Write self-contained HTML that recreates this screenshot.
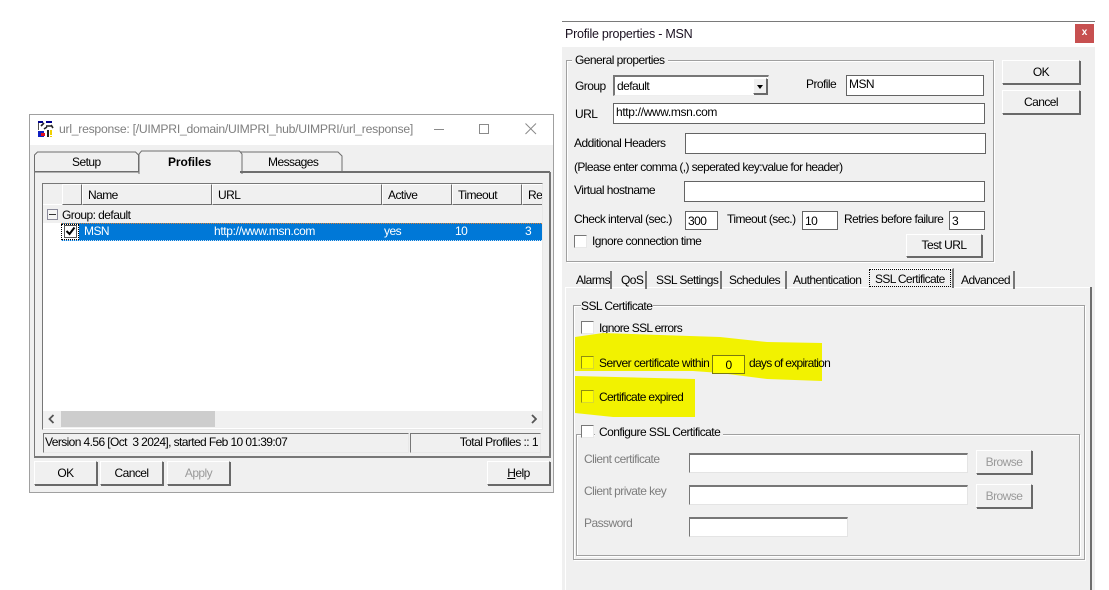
<!DOCTYPE html>
<html><head><meta charset="utf-8"><style>
html,body{margin:0;padding:0;background:#fff}
#p{position:relative;width:1109px;height:590px;overflow:hidden;background:#fff;font:12px/14px "Liberation Sans",sans-serif;color:#000;letter-spacing:-.55px}
#p div,#p span.t{position:absolute;box-sizing:border-box;white-space:nowrap}
.b{background:#f0f0f0;border:1px solid;border-color:#fff #696969 #696969 #fff;box-shadow:1px 1px 0 #696969;text-align:center}
.i{background:#fff;border:1px solid #646464;padding-left:2px}
.d{background:#fff;border:1px solid #e4e4e4;border-top:2px solid #777;border-left:1px solid #777}
.c{width:13px;height:13px;background:#fff;border:1px solid;border-color:#777 #e8e8e8 #e8e8e8 #777}
.y{background:#ffff00;border-color:#8f8f10 #d8d830 #d8d830 #8f8f10}
.g{border:1px solid #a0a0a0;box-shadow:1px 1px 0 #fff,inset 1px 1px 0 #fff}
.h{background:#f0f0f0;border:1px solid;border-color:#fff #6e6e6e #6e6e6e #fff;padding-left:5px;line-height:20px}
.dis{color:#7d7d7d}
.tb{border-right:2px solid #777;height:18px;line-height:18px}
.u{letter-spacing:-.35px}
.n{letter-spacing:-.66px}
</style></head><body><div id="p">

<!-- left window -->
<div style="left:29px;top:114px;width:525px;height:379px;background:#f0f0f0;border:1px solid #a0a0a0"></div>
<div style="left:30px;top:115px;width:523px;height:30px;background:#fff"></div>
<svg style="position:absolute;left:38px;top:121px" width="16" height="16" viewBox="0 0 16 16"><rect x="1" y="1" width="14" height="9" fill="#fff"/><rect width="5" height="2" fill="#00008c"/><rect x="8" width="6" height="2" fill="#00008c"/><path d="M0 2v7M3 5l3-3M8 5h5M13 4l2 3M6 8l3-2" stroke="#222" stroke-width="1.6" fill="none"/><rect y="10" width="6" height="6" fill="#1020c0"/><rect x="3" y="12" width="4" height="3" fill="#e01020"/><rect x="9" y="9" width="2" height="7" fill="#222"/><rect x="12" y="9" width="2" height="5" fill="#f0d000"/><rect x="12" y="15" width="2" height="1" fill="#f0d000"/></svg>
<div style="left:59px;top:122px;color:#7f7f7f;font-size:12.2px;letter-spacing:-.26px">url_response: [/UIMPRI_domain/UIMPRI_hub/UIMPRI/url_response]</div>
<div style="left:434px;top:129px;width:10px;height:1px;background:#8a8a8a"></div>
<div style="left:479px;top:124px;width:10px;height:10px;border:1px solid #8a8a8a"></div>
<svg style="position:absolute;left:525px;top:123px" width="12" height="12"><path d="M.5 .5l10.500 10.500M11 .5L.5 11" stroke="#8a8a8a" fill="none"/></svg>

<!-- left tabs -->
<svg style="position:absolute;left:33px;top:150px" width="315" height="24" fill="#f0f0f0" stroke="#6e6e6e"><path d="M1.500 22V5l3-3h98l3 3v17z"/><path d="M207 22V2h98l4 4v16z"/><path d="M106 24V4l2.500-3h98l2.500 3v20" fill="#f0f0f0"/></svg>
<div style="left:72px;top:155px">Setup</div>
<div style="left:168px;top:155px;font-weight:bold;letter-spacing:-.1px">Profiles</div>
<div style="left:268px;top:155px">Messages</div>
<!-- left panel -->
<div style="left:34px;top:171px;width:104px;height:1px;background:#6e6e6e"></div>
<div style="left:240px;top:171px;width:310px;height:2px;background:#6e6e6e"></div>
<div style="left:34px;top:171px;height:287px;width:1px;background:#777"></div>
<div style="left:549px;top:172px;height:286px;width:2px;background:#777"></div>
<div style="left:34px;top:456px;width:517px;height:2px;background:#777"></div>
<!-- list -->
<div style="left:42px;top:183px;width:501px;height:247px;background:#fff;border:1px solid;border-color:#777 #e8e8e8 #e8e8e8 #777"></div>
<div style="left:43px;top:184px;width:19px;height:20px;background:#f0f0f0"></div>
<div class="h" style="left:62px;top:184px;width:20px;height:21px"></div>
<div class="h" style="left:82px;top:184px;width:130px;height:21px">Name</div>
<div class="h" style="left:212px;top:184px;width:170px;height:21px">URL</div>
<div class="h" style="left:382px;top:184px;width:70px;height:21px">Active</div>
<div class="h" style="left:452px;top:184px;width:70px;height:21px">Timeout</div>
<div class="h" style="left:522px;top:184px;width:20px;height:21px;border-right:none;overflow:hidden">Re</div>
<div style="left:43px;top:205px;width:499px;height:18px;background:#f0f0f0"></div>
<div style="left:47px;top:209px;width:11px;height:11px;border:1px solid #8a8a9a;background:#f4f4f4"></div>
<div style="left:49px;top:214px;width:7px;height:1px;background:#333"></div>
<div style="left:62px;top:208px">Group: default</div>
<div style="left:61px;top:223px;width:481px;height:18px;background:#0078d7;border-top:1px dotted #e08030;border-bottom:1px dotted #cfe2f5"></div>
<div style="left:61px;top:224px;width:18px;height:16px;background:#fff;border:1px dotted #000"></div>
<div style="left:64px;top:225px;width:13px;height:13px;background:#fff;border:1px solid #555"></div>
<svg style="position:absolute;left:65px;top:226px" width="11" height="11"><path d="M1.500 5l3 3 5-6.500" stroke="#000" stroke-width="2" fill="none"/></svg>
<div style="left:84px;top:224px;color:#fff">MSN</div>
<div class="u" style="left:214px;top:224px;color:#fff">http://www.msn.com</div>
<div style="left:384px;top:224px;color:#fff">yes</div>
<div style="left:455px;top:224px;color:#fff">10</div>
<div style="left:525px;top:224px;color:#fff">3</div>
<!-- scrollbar -->
<div style="left:43px;top:411px;width:499px;height:17px;background:#f0f0f0"></div>
<div style="left:61px;top:411px;width:154px;height:16px;background:#cdcdcd"></div>
<svg style="position:absolute;left:47px;top:414px" width="490" height="10" fill="none" stroke="#555" stroke-width="1.800"><path d="M6.500 1L2.500 5l4 4M485 1l4 4-4 4"/></svg>
<!-- status -->
<div style="left:43px;top:433px;width:366px;height:20px;border:1px solid;border-color:#777 #e8e8e8 #e8e8e8 #777;padding-left:1px;line-height:17px;letter-spacing:-.6px">Version 4.56 [Oct&nbsp; 3 2024], started Feb 10 01:39:07</div>
<div style="left:410px;top:433px;width:131px;height:20px;border:1px solid;border-color:#777 #e8e8e8 #e8e8e8 #777;text-align:right;line-height:17px;padding-right:2px">Total Profiles :: 1</div>
<!-- buttons -->
<div class="b" style="left:34px;top:461px;width:63px;height:24px;line-height:22px">OK</div>
<div class="b" style="left:100px;top:461px;width:63px;height:24px;line-height:22px">Cancel</div>
<div class="b dis" style="left:167px;top:461px;width:63px;height:24px;line-height:22px;color:#9a9a9a">Apply</div>
<div class="b" style="left:487px;top:461px;width:63px;height:24px;line-height:22px"><u>H</u>elp</div>

<!-- right dialog -->
<div style="left:562px;top:21px;width:533px;height:569px;background:#f0f0f0"></div>
<div style="left:562px;top:21px;width:533px;height:1px;background:#7a7a7a"></div>
<div style="left:562px;top:22px;width:533px;height:25px;background:#fff"></div>
<div style="left:565px;top:27px;font-size:12.500px;color:#1a1020;letter-spacing:-.25px">Profile properties - MSN</div>
<div style="left:1075px;top:24px;width:19px;height:19px;background:#c75050;color:#fff;font-weight:bold;font-size:10px;line-height:18px;text-align:center;letter-spacing:0">x</div>

<div class="g" style="left:566px;top:60px;width:428px;height:202px"></div>
<div style="left:572px;top:53px;background:#f0f0f0;padding:0 3px">General properties</div>
<div style="left:575px;top:79px">Group</div>
<div class="i" style="left:613px;top:75px;width:156px;height:21px;border-top:2px solid #777;border-left:2px solid #777;border-right:1px solid #eee;border-bottom:1px solid #eee;line-height:18px">default</div>
<div class="b" style="left:753px;top:78px;width:14px;height:16px"></div>
<div style="left:757px;top:85px;width:0;height:0;border:3.500px solid transparent;border-top:4px solid #000;border-bottom:none"></div>
<div style="left:806px;top:77px">Profile</div>
<div class="i" style="left:846px;top:75px;width:138px;height:21px;line-height:16px">MSN</div>
<div style="left:575px;top:107px">URL</div>
<div class="i u" style="left:613px;top:103px;width:372px;height:21px;line-height:16px">http://www.msn.com</div>
<div style="left:574px;top:136px">Additional Headers</div>
<div class="i" style="left:685px;top:133px;width:301px;height:21px"></div>
<div style="left:574px;top:160px;letter-spacing:-.6px">(Please enter comma (,) seperated key:value for header)</div>
<div style="left:574px;top:183px">Virtual hostname</div>
<div class="i" style="left:684px;top:181px;width:301px;height:21px"></div>
<div style="left:574px;top:212px">Check interval (sec.)</div>
<div class="i" style="left:685px;top:211px;width:33px;height:19px;line-height:19px">300</div>
<div style="left:727px;top:212px">Timeout (sec.)</div>
<div class="i" style="left:802px;top:211px;width:36px;height:19px;line-height:19px">10</div>
<div style="left:844px;top:212px">Retries before failure</div>
<div class="i" style="left:949px;top:211px;width:36px;height:19px;line-height:19px">3</div>
<div class="c" style="left:574px;top:235px"></div>
<div style="left:592px;top:234px">Ignore connection time</div>
<div class="b" style="left:906px;top:234px;width:76px;height:23px;line-height:21px">Test URL</div>

<div class="b" style="left:1002px;top:60px;width:78px;height:24px;line-height:22px">OK</div>
<div class="b" style="left:1002px;top:90px;width:78px;height:24px;line-height:22px">Cancel</div>

<!-- lower tabs -->
<div style="left:565px;top:287px;width:526px;height:1px;background:#fff"></div>
<div style="left:565px;top:287px;width:1px;height:303px;background:#fff"></div>
<div style="left:1090px;top:287px;width:2px;height:303px;background:#6e6e6e"></div>
<div class="tb" style="left:570px;top:271px;width:42px;padding-left:6px">Alarms</div>
<div class="tb" style="left:612px;top:271px;width:35px;padding-left:9px">QoS</div>
<div class="tb" style="left:647px;top:271px;width:75px;padding-left:9px">SSL Settings</div>
<div class="tb" style="left:722px;top:271px;width:65px;padding-left:7px">Schedules</div>
<div class="tb" style="left:787px;top:271px;width:81px;border-right:none;padding-left:6px">Authentication</div>
<div class="tb n" style="left:868px;top:268px;width:86px;height:20px;background:#f0f0f0;border-top:1px solid #fff;line-height:20px;padding-left:7px"><div style="left:1px;top:0;width:82px;height:18px;border:1px dotted #000"></div>SSL Certificate</div>
<div class="tb" style="left:954px;top:271px;width:61px;padding-left:7px">Advanced</div>

<!-- ssl group -->
<div class="g" style="left:573px;top:305px;width:512px;height:255px"></div>
<div style="left:581px;top:299px;background:#f0f0f0;padding-right:1px">SSL Certificate</div>
<div class="g" style="left:576px;top:434px;width:504px;height:122px"></div>

<div class="c" style="left:581px;top:321px"></div>
<div class="n" style="left:599px;top:321px">Ignore SSL errors</div>

<!-- highlight -->
<svg style="position:absolute;left:570px;top:328px" width="260" height="95"><path fill="#f2f200" d="M5 9L33 5 90 7 150 9 197 14 252 15V53L197 51 150 45 123 43H5z"/><path fill="#f2f200" d="M5 48L125 51V89H43L5 85z"/></svg>
<div class="c y" style="left:581px;top:356px"></div>
<div style="left:599px;top:356px">Server certificate within</div>
<div class="i" style="left:712px;top:355px;width:33px;height:19px;background:#ffff00;border-color:#7a7a10;text-align:center;line-height:19px;padding:0">0</div>
<div class="n" style="left:749px;top:356px;letter-spacing:-.72px">days of expiration</div>
<div class="c y" style="left:581px;top:390px"></div>
<div class="n" style="left:599px;top:390px">Certificate expired</div>

<div class="c" style="left:581px;top:425px"></div>
<div style="left:595px;top:425px;background:#f0f0f0;padding:0 3px 0 4px">Configure SSL Certificate</div>

<div class="dis" style="left:584px;top:452px">Client certificate</div>
<div class="d" style="left:689px;top:453px;width:279px;height:20px"></div>
<div class="b" style="left:976px;top:450px;width:56px;height:24px;line-height:22px;color:#9a9a9a">Browse</div>
<div class="dis" style="left:584px;top:484px">Client private key</div>
<div class="d" style="left:689px;top:485px;width:279px;height:20px"></div>
<div class="b" style="left:976px;top:484px;width:56px;height:24px;line-height:22px;color:#9a9a9a">Browse</div>
<div class="dis" style="left:584px;top:516px">Password</div>
<div class="d" style="left:689px;top:517px;width:159px;height:20px"></div>

</div></body></html>
